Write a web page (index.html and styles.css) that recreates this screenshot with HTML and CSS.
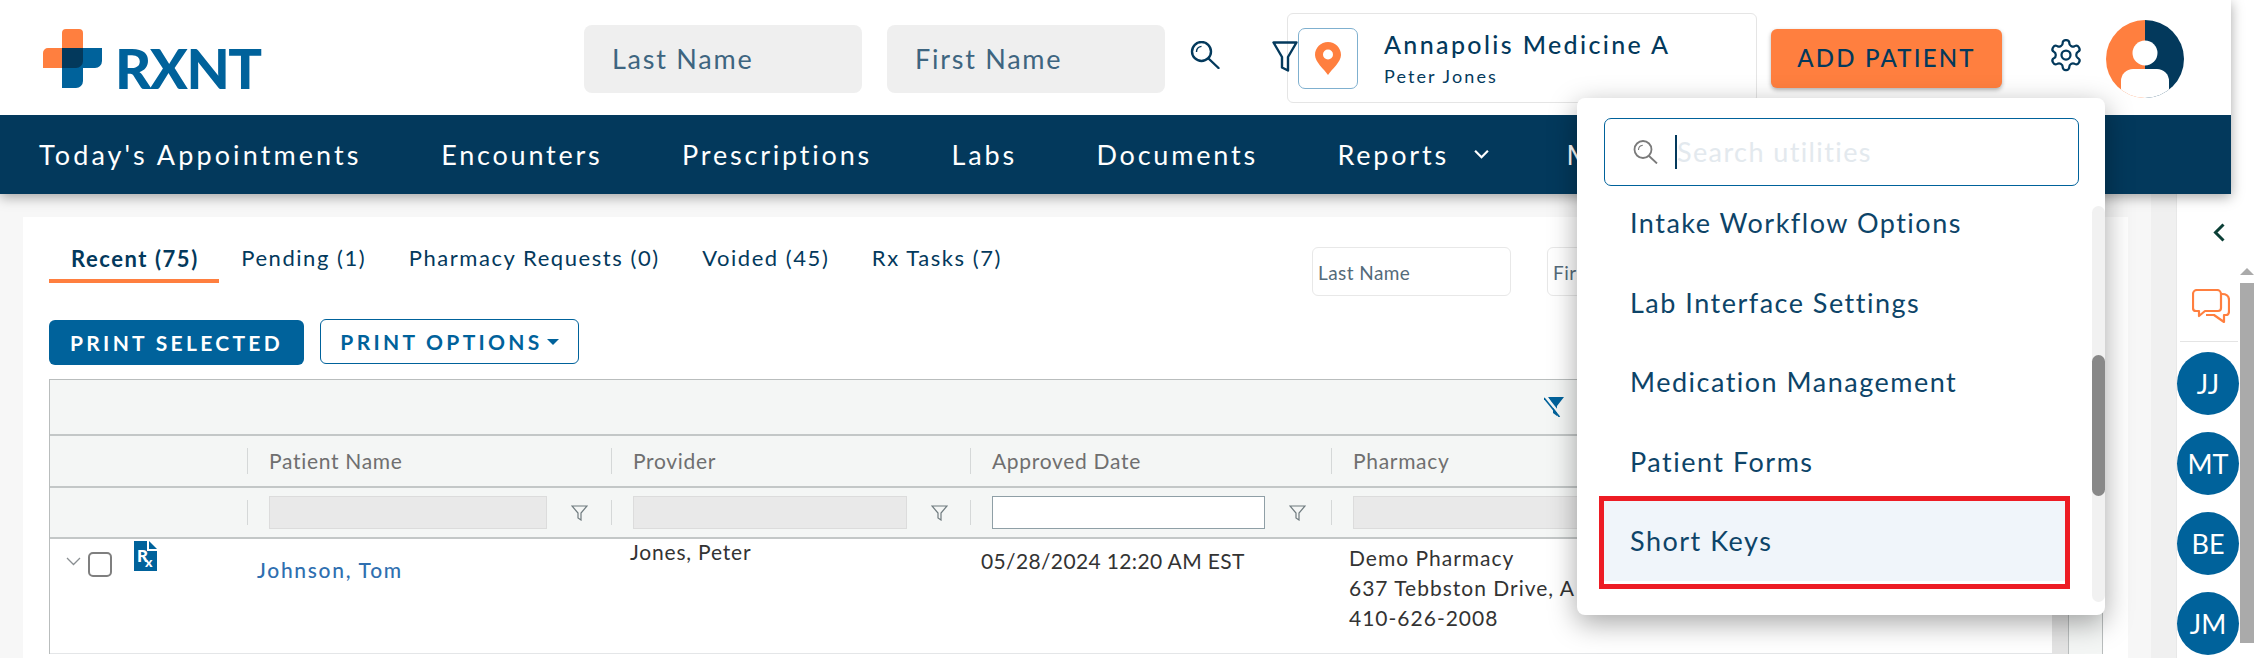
FILE: index.html
```html
<!DOCTYPE html>
<html lang="en">
<head>
<meta charset="utf-8">
<title>RXNT</title>
<link rel="stylesheet" href="styles.css">
</head>
<body>
<div class="page">
  <div class="top">
    <header class="header">
      <div class="logo">
        <svg class="logo-mark" viewBox="0 0 59 59" width="59" height="59" aria-hidden="true">
          <path d="M19 4a4 4 0 0 1 4-4h13a4 4 0 0 1 4 4v35H0V24a5 5 0 0 1 5-5h14z" fill="#ff7f3f"/>
          <path d="M19 19h40v13a7 7 0 0 1-7 7H40v13a7 7 0 0 1-7 7H19z" fill="#00629b"/>
          <path d="M19 19h21v13a7 7 0 0 1-7 7H19z" fill="#03395c"/>
        </svg>
        <span class="logo-text">RXNT</span>
      </div>
      <div class="hsearch hs1"><span class="ph">Last Name</span></div>
      <div class="hsearch hs2"><span class="ph">First Name</span></div>
      <svg class="ico-search" viewBox="0 0 30 28" width="30" height="28" aria-hidden="true">
        <circle cx="11.5" cy="10.5" r="9.5" fill="none" stroke="#03395c" stroke-width="2.4"/>
        <path d="M18.5 17.5L28.5 27" fill="none" stroke="#03395c" stroke-width="2.4" stroke-linecap="round"/>
        <path d="M6.5 11c0-3 2-5.2 5-5.6" fill="none" stroke="#03395c" stroke-width="1.4"/>
      </svg>
      <svg class="ico-funnel" viewBox="0 0 26 31" width="26" height="31" aria-hidden="true">
        <path d="M1.5 1.5h23L16 16v13.5l-6-3V16z" fill="none" stroke="#03395c" stroke-width="2.4" stroke-linejoin="round"/>
      </svg>
      <div class="loc">
        <div class="loc-pin">
          <svg viewBox="0 0 26 33" width="26" height="33" aria-hidden="true">
            <path d="M13 0C5.8 0 0 5.8 0 13c0 7 9 14 13 20 4-6 13-13 13-20C26 5.8 20.2 0 13 0z" fill="#ff7f3f"/>
            <circle cx="13" cy="12.5" r="5" fill="#fff"/>
          </svg>
        </div>
        <div class="loc-text">
          <div class="loc-name">Annapolis Medicine A</div>
          <div class="loc-user">Peter Jones</div>
        </div>
      </div>
      <button class="add">ADD PATIENT</button>
      <svg class="ico-gear" viewBox="0 0 24 24" width="36" height="36" aria-hidden="true">
        <path d="M12.22 2h-.44a2 2 0 0 0-2 2v.18a2 2 0 0 1-1 1.73l-.43.25a2 2 0 0 1-2 0l-.15-.08a2 2 0 0 0-2.73.73l-.22.38a2 2 0 0 0 .73 2.73l.15.1a2 2 0 0 1 1 1.72v.51a2 2 0 0 1-1 1.74l-.15.09a2 2 0 0 0-.73 2.73l.22.38a2 2 0 0 0 2.73.73l.15-.08a2 2 0 0 1 2 0l.43.25a2 2 0 0 1 1 1.73V20a2 2 0 0 0 2 2h.44a2 2 0 0 0 2-2v-.18a2 2 0 0 1 1-1.73l.43-.25a2 2 0 0 1 2 0l.15.08a2 2 0 0 0 2.73-.73l.22-.39a2 2 0 0 0-.73-2.73l-.15-.08a2 2 0 0 1-1-1.74v-.5a2 2 0 0 1 1-1.74l.15-.09a2 2 0 0 0 .73-2.73l-.22-.38a2 2 0 0 0-2.73-.73l-.15.08a2 2 0 0 1-2 0l-.43-.25a2 2 0 0 1-1-1.73V4a2 2 0 0 0-2-2z" fill="none" stroke="#03395c" stroke-width="1.5"/>
        <circle cx="12" cy="12" r="3" fill="none" stroke="#03395c" stroke-width="1.5"/>
      </svg>
      <svg class="avatar" viewBox="0 0 78 78" width="78" height="78" aria-hidden="true">
        <defs><clipPath id="avc"><circle cx="39" cy="39" r="39"/></clipPath></defs>
        <g clip-path="url(#avc)">
          <rect width="39" height="78" fill="#ff7f3f"/>
          <rect x="39" width="39" height="78" fill="#03395c"/>
          <circle cx="39" cy="33" r="12.5" fill="#fff"/>
          <rect x="15" y="49" width="48" height="40" rx="12" fill="#fff"/>
        </g>
      </svg>
    </header>
    <nav class="nav">
      <a class="nav-item nav-first">Today's Appointments</a>
      <a class="nav-item">Encounters</a>
      <a class="nav-item">Prescriptions</a>
      <a class="nav-item">Labs</a>
      <a class="nav-item">Documents</a>
      <a class="nav-item nav-drop"><span>Reports</span>
        <svg viewBox="0 0 18 12" width="17" height="11" aria-hidden="true"><path d="M2 2l7 7 7-7" fill="none" stroke="#fff" stroke-width="2.4"/></svg>
      </a>
      <a class="nav-item nav-clip">M</a>
    </nav>
  </div>

  <div class="content">
    <main class="main">
      <section class="card">
        <div class="toolbar">
          <div class="tabs">
            <a class="tab tab-on">Recent (75)</a>
            <a class="tab">Pending (1)</a>
            <a class="tab">Pharmacy Requests (0)</a>
            <a class="tab">Voided (45)</a>
            <a class="tab">Rx Tasks (7)</a>
          </div>
          <div class="mini-filters">
            <div class="mini"><span>Last Name</span></div>
            <div class="mini"><span>First Name</span></div>
          </div>
        </div>
        <div class="actions">
          <button class="btn btn-solid">PRINT SELECTED</button>
          <button class="btn btn-line"><span>PRINT OPTIONS</span><i class="caret"></i></button>
        </div>
        <div class="table">
          <div class="tbl-main">
            <div class="band">
              <svg class="ico-clear" viewBox="0 0 20 20" width="20" height="20" aria-hidden="true">
                <path d="M4 0h16l-7 9v10l-4-3V8z" fill="#00629b"/>
                <path d="M2 0l16 20" fill="none" stroke="#f4f6f5" stroke-width="2.6"/>
                <path d="M0 1l15.500 19" fill="none" stroke="#00629b" stroke-width="1.700"/>
              </svg>
            </div>
            <div class="row row-head">
              <div class="cell c0"></div>
              <div class="cell c1 sep">Patient Name</div>
              <div class="cell c2 sep">Provider</div>
              <div class="cell c3 sep">Approved Date</div>
              <div class="cell c4 sep">Pharmacy</div>
            </div>
            <div class="row row-filter">
              <div class="cell c0"></div>
              <div class="cell c1 sep"><div class="f-input w278"></div><svg class="ico-f" viewBox="0 0 17 16" width="17" height="16" aria-hidden="true"><path d="M1 1h15l-6 7v7l-3-2V8z" fill="none" stroke="#6f7b7f" stroke-width="1.2"/></svg></div>
              <div class="cell c2 sep"><div class="f-input w274"></div><svg class="ico-f" viewBox="0 0 17 16" width="17" height="16" aria-hidden="true"><path d="M1 1h15l-6 7v7l-3-2V8z" fill="none" stroke="#6f7b7f" stroke-width="1.2"/></svg></div>
              <div class="cell c3 sep"><div class="f-input w273 f-on"></div><svg class="ico-f" viewBox="0 0 17 16" width="17" height="16" aria-hidden="true"><path d="M1 1h15l-6 7v7l-3-2V8z" fill="none" stroke="#6f7b7f" stroke-width="1.2"/></svg></div>
              <div class="cell c4 sep"><div class="f-input w278"></div></div>
            </div>
            <div class="row row-data">
              <div class="cell c0 d0">
                <svg class="ico-chev" viewBox="0 0 15 9" width="15" height="9" aria-hidden="true"><path d="M1 1l6.500 6.500L14 1" fill="none" stroke="#8a8f92" stroke-width="1.300"/></svg>
                <span class="check"></span>
                <svg class="ico-rx" viewBox="0 0 23 30" width="23" height="30" aria-hidden="true">
                  <path d="M0 0h13v10h10v20H0z" fill="#00629b"/><path d="M15 0l8 8h-8z" fill="#00629b"/>
                  <text x="3" y="21" class="rx-text">R</text><text x="11" y="26" class="rx-text rx-sm">x</text>
                </svg>
              </div>
              <div class="cell c1 d1"><a class="link">Johnson, Tom</a></div>
              <div class="cell c2 d2">Jones, Peter</div>
              <div class="cell c3 d3">05/28/2024 12:20 AM EST</div>
              <div class="cell c4 d4">Demo Pharmacy<br>637 Tebbston Drive, A<br>410-626-2008</div>
            </div>
          </div>
          <div class="tbl-scroll"><div class="tbl-track"></div><div class="tbl-tail"></div></div>
        </div>
      </section>
      <div class="strip"></div>
    </main>
    <aside class="side">
      <div class="side-col">
        <svg class="ico-back" viewBox="0 0 12 19" width="12" height="19" aria-hidden="true"><path d="M10.500 1.500L2.500 9.500l8 8" fill="none" stroke="#0b3f36" stroke-width="3"/></svg>
        <svg class="ico-chat" viewBox="0 0 38 35" width="38" height="35" aria-hidden="true">
          <path d="M5 1h20a4 4 0 0 1 4 4v14a3 3 0 0 1-3 3H13l-6 5v-5H4a3 3 0 0 1-3-3V5a4 4 0 0 1 4-4z" fill="none" stroke="#ff7f3f" stroke-width="2.200" stroke-linejoin="round"/>
          <path d="M30 5c4 0 7 2 7 6v11c0 2-1 4-3 4h-2v7l-10-7h-8" fill="none" stroke="#ff7f3f" stroke-width="2.200" stroke-linejoin="round"/>
        </svg>
        <div class="side-rule"></div>
        <div class="bubble">JJ</div>
        <div class="bubble">MT</div>
        <div class="bubble">BE</div>
        <div class="bubble">JM</div>
      </div>
      <div class="side-scroll"><i class="up"></i><div class="side-thumb"></div></div>
    </aside>
  </div>

  <div class="menu">
    <div class="menu-search">
      <svg viewBox="0 0 25 24" width="25" height="24" aria-hidden="true">
        <circle cx="10" cy="9.500" r="8.500" fill="none" stroke="#7a7a7a" stroke-width="1.800"/>
        <path d="M16 16l8 7.500" fill="none" stroke="#7a7a7a" stroke-width="1.800"/>
        <path d="M5.500 10c0-2.600 1.800-4.500 4.300-4.800" fill="none" stroke="#7a7a7a" stroke-width="1.100"/>
      </svg>
      <i class="cursor"></i>
      <span class="menu-ph">Search utilities</span>
    </div>
    <div class="menu-list">
      <div class="menu-item"><span>Intake Workflow Options</span></div>
      <div class="menu-item"><span>Lab Interface Settings</span></div>
      <div class="menu-item"><span>Medication Management</span></div>
      <div class="menu-item"><span>Patient Forms</span></div>
      <div class="menu-item menu-sel"><span>Short Keys</span><i class="mark"></i></div>
    </div>
    <div class="menu-track"><div class="menu-thumb"></div></div>
  </div>
</div>
</body>
</html>
```
FILE: styles.css
```css
* { box-sizing: border-box; }
html, body { margin: 0; padding: 0; background: #fff; }
body { font-family: "Lato", "Noto Sans", sans-serif; color: #03395c; }
.page { position: relative; width: 2255px; height: 658px; overflow: hidden; }

.top { position: relative; z-index: 2; width: 2231px; box-shadow: 0 3px 12px rgba(0,0,0,.35); }
.header { display: flex; align-items: flex-start; height: 115px; background: #fff; }
.logo { display: flex; align-items: flex-end; margin: 29px 0 0 43px; width: 218px; height: 59px; }
.logo-mark { flex: none; }
.logo-text { margin-left: 13px; font-size: 56px; line-height: 40px; height: 40px; font-weight: 900; color: #00629b; letter-spacing: -1.5px; }
.hsearch { width: 278px; height: 68px; margin-top: 25px; background: #efefef; border-radius: 8px; padding-left: 28px; line-height: 68px; }
.hs1 { margin-left: 323px; }
.hs2 { margin-left: 25px; }
.ph { font-size: 27px; color: #3e6580; letter-spacing: 1.75px; }
.ico-search { margin: 41px 0 0 25px; flex: none; }
.ico-funnel { margin: 41px -11px 0 52px; flex: none; position: relative; z-index: 1; }
.loc { display: flex; width: 470px; height: 90px; margin-top: 13px; border: 1px solid #e5e5e5; border-radius: 6px; padding: 14px 0 0 10px; }
.loc-pin { display: flex; align-items: center; justify-content: center; width: 60px; height: 61px; border: 1px solid #7fb0cf; border-radius: 7px; }
.loc-text { margin-left: 26px; }
.loc-name { font-size: 25px; line-height: 28px; margin-top: 2px; letter-spacing: 2.37px; font-weight: 500; white-space: nowrap; }
.loc-user { font-size: 18px; line-height: 20px; margin-top: 8px; letter-spacing: 2.1px; }
.add { width: 231px; height: 59px; margin: 29px 0 0 14px; padding: 0 0 2px; border: 0; border-radius: 6px; background: #ff7f3f; color: #03395c; font: 500 24px "Lato", sans-serif; letter-spacing: 2.2px; box-shadow: 0 2px 4px rgba(0,0,0,.3); }
.ico-gear { margin: 37px 0 0 46px; flex: none; }
.avatar { margin: 20px 0 0 22px; flex: none; }

.nav { display: flex; align-items: center; gap: 79.5px; height: 79px; padding-left: 39px; background: #03395c; }
.nav-item { color: #fff; font-size: 27px; letter-spacing: 2.8px; white-space: nowrap; }
.nav-first { letter-spacing: 3.1px; }
.nav-drop { display: flex; align-items: center; gap: 24px; }
.nav-clip { margin-left: -3px; }

.content { display: flex; height: 464px; }
.main { display: flex; width: 2177px; background: #f7f7f7; border-right: 1px solid #e8e8e8; }
.card { width: 2106px; margin: 23px 0 0 23px; padding-left: 26px; background: #fff; }
.strip { width: 25px; margin-left: 23px; background: #f0f0f0; }

.toolbar { display: flex; height: 102px; }
.tabs { display: flex; width: 1263px; height: 66px; }
.tab { display: block; padding: 20px 20.5px 0 22px; height: 66px; font-size: 22px; line-height: 42px; letter-spacing: 1.55px; white-space: nowrap; }
.tab-on { font-weight: 700; border-bottom: 4px solid #ff7f3f; line-height: 44px; }
.mini-filters { display: flex; gap: 36px; padding-top: 30px; }
.mini { width: 199px; height: 49px; border: 1px solid #e8e8e8; border-radius: 6px; padding-left: 5px; font-size: 19px; line-height: 50px; color: #546b7a; letter-spacing: .43px; white-space: nowrap; overflow: hidden; }

.actions { display: flex; align-items: flex-start; gap: 16px; height: 60px; }
.btn { height: 45px; border-radius: 6px; font: 700 21px "Lato", sans-serif; letter-spacing: 3.3px; padding: 0; }
.btn-solid { width: 255px; margin-top: 1px; border: 0; background: #00629b; color: #fff; }
.btn-line { display: flex; align-items: center; justify-content: center; gap: 4px; width: 259px; background: #fff; border: 1px solid #00629b; color: #00629b; }
.caret { border: 6px solid transparent; border-top-color: #00629b; border-bottom: 0; }

.table { display: flex; width: 2054px; }
.tbl-main { position: relative; width: 2003px; border: 1px solid #b9bdbd; border-right: 0; border-bottom: 0; }
.band { display: flex; justify-content: flex-end; height: 56px; padding: 17px 488px 0 0; background: #f4f6f5; border-bottom: 2px solid #c3c7c7; }
.row { display: grid; grid-template-columns: 197px 364px 359px 361px 1fr; }
.row-head { height: 52px; background: #f4f6f5; border-bottom: 2px solid #c3c7c7; align-items: center; }
.row-head .cell { color: #6f6f6f; font-size: 21px; letter-spacing: .7px; padding-left: 21px; height: 26px; line-height: 26px; }
.row-filter { height: 51px; background: #f4f6f5; border-bottom: 2px solid #c3c7c7; align-items: center; }
.row-filter .cell { display: flex; align-items: center; height: 25px; padding-left: 21px; gap: 24px; }
.sep { border-left: 1px solid #d5d8d8; }
.f-input { flex: none; height: 33px; background: #e9e9e9; border: 1px solid #dcdcdc; }
.w278 { width: 278px; }
.w274 { width: 274px; }
.w273 { width: 273px; }
.f-on { background: #fff; border-color: #8f9fa6; }
.ico-f { flex: none; }
.row-data { height: 115px; border-bottom: 1px solid #e4e6e8; font-size: 21px; color: #333; letter-spacing: .8px; }
.d0 { position: relative; display: flex; align-items: flex-start; padding-left: 16px; }
.ico-chev { margin-top: 18px; flex: none; }
.check { flex: none; width: 24px; height: 25px; margin: 13px 0 0 7px; border: 2px solid #7f7f7f; border-radius: 5px; }
.ico-rx { flex: none; margin: 2px 0 0 22px; }
.rx-text { font: 900 17px "Lato", sans-serif; fill: #fff; letter-spacing: 0; }
.rx-sm { font-size: 14px; }
.d1 { padding: 17px 0 0 10px; line-height: 28px; }
.link { color: #2f6fb0; font-weight: 500; letter-spacing: 1.7px; }
.d2 { padding: 0 0 0 19px; line-height: 26px; }
.d3 { padding: 8px 0 0 11px; line-height: 28px; letter-spacing: .36px; }
.d4 { padding: 4px 0 0 18px; line-height: 30px; white-space: nowrap; letter-spacing: 1px; }
.tbl-scroll { display: flex; height: 275px; }
.tbl-track { width: 17px; background: #e4e4e4; border-right: 1px solid #b9bdbd; }
.tbl-tail { width: 34px; background: #f4f6f5; border-right: 1px solid #b9bdbd; }

.side { display: flex; width: 77px; background: #fff; }
.side-col { display: flex; flex-direction: column; align-items: flex-start; width: 62px; }
.ico-back { margin: 29px 0 0 36px; flex: none; }
.ico-chat { margin: 47px 0 0 15px; flex: none; }
.side-rule { width: 58px; height: 1px; margin: 17px 0 10px 3px; background: #e4e4e4; flex: none; }
.bubble { flex: none; width: 62px; height: 63px; margin-bottom: 17px; border-radius: 50%; background: #00629b; color: #fff; font-size: 27px; text-align: center; line-height: 63px; }
.side-scroll { width: 14px; margin-left: 1px; display: flex; flex-direction: column; padding-top: 74px; }
.up { display: block; width: 0; height: 0; margin: 0 0 8px 0; border: 7px solid transparent; border-top: 0; border-bottom: 7px solid #aaa; }
.side-thumb { height: 360px; background: #aaa; }

.menu { position: absolute; z-index: 3; left: 1577px; top: 98px; width: 528px; height: 517px; background: #fff; border-radius: 8px; box-shadow: 0 8px 28px rgba(0,0,0,.35); padding: 20px 0 0 27px; }
.menu-search { display: flex; align-items: center; width: 475px; height: 68px; border: 1px solid #00629b; border-radius: 7px; padding-left: 28px; }
.cursor { width: 2px; height: 34px; margin-left: 17px; background: #03395c; flex: none; }
.menu-ph { font-size: 27px; line-height: 30px; color: #e3e9ee; letter-spacing: 1.4px; }
.menu-list { height: 409px; width: 461px; margin-top: -3px; }
.menu-item { height: 79.5px; padding-left: 26px; font-size: 27px; line-height: 79.5px; letter-spacing: 1.5px; color: #0d4468; white-space: nowrap; }
.menu-sel { position: relative; background: #f0f5fa; }
.mark { position: absolute; inset: -5px -5px -8px -5px; border: 5px solid #ed1c24; }
.menu-track { position: absolute; right: 0; top: 108px; width: 13px; height: 396px; background: #f1f1f1; border-radius: 7px; }
.menu-thumb { height: 141px; margin-top: 149px; background: #888; border-radius: 7px; }
```
